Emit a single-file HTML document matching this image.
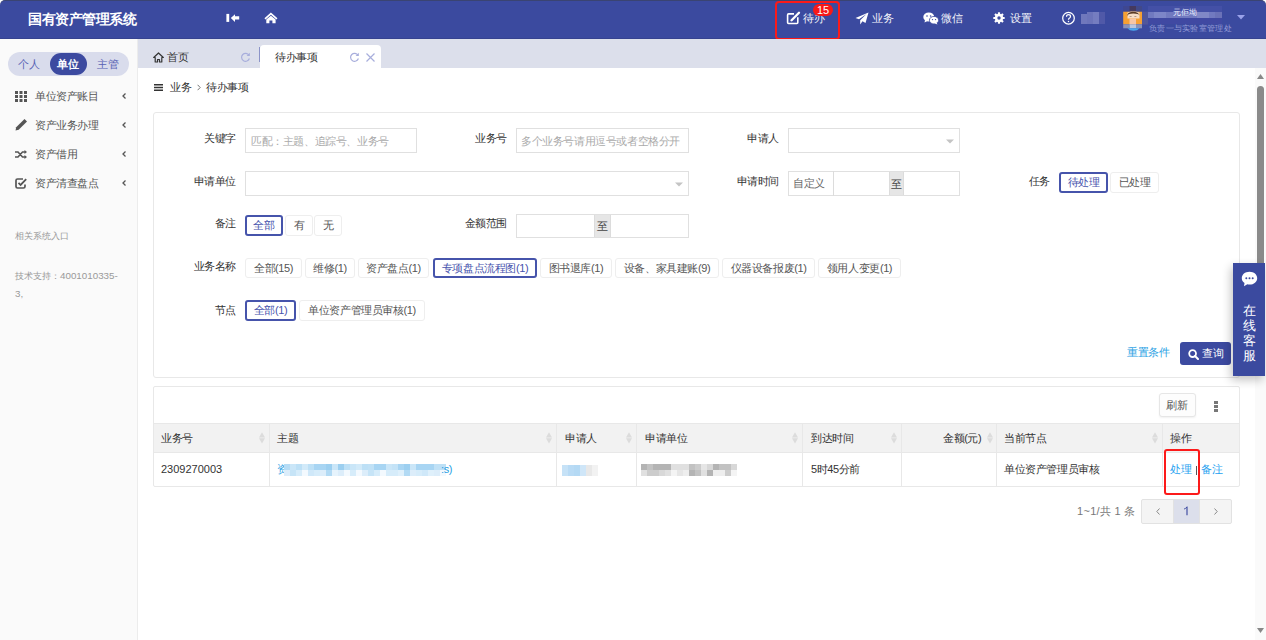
<!DOCTYPE html>
<html><head><meta charset="utf-8">
<style>
*{box-sizing:border-box;margin:0;padding:0}
html,body{width:1266px;height:640px;overflow:hidden;background:#fff;font-family:"Liberation Sans",sans-serif;color:#333;letter-spacing:-0.4px}
.a{position:absolute;white-space:nowrap}
#hdr{position:absolute;left:0;top:0;width:1266px;height:39px;background:#3b4a9f;border-top:1px solid #3a4472;border-bottom:1px solid #36438f;border-radius:5px 5px 0 0}
.nav{color:#f2f3fa;font-size:10.5px;line-height:20px}
#side{position:absolute;left:0;top:39px;width:138px;height:601px;background:#fafafa;border-right:1px solid #ececec}
.mi{color:#555;font-size:11px;line-height:20px}
.car{position:absolute;left:122px;width:4px;height:6px}
#tabs{position:absolute;left:138px;top:39px;width:1128px;height:29px;background:#dcdfeb}
.lb{font-size:11px;line-height:20px;color:#333;text-align:right}
.inp{position:absolute;border:1px solid #e0e0e0;background:#fff}
.ph{font-size:11px;line-height:20px;color:#aaa}
.btn{position:absolute;border:1px solid #eeeeee;border-radius:3px;background:#fff;font-size:11px;line-height:18px;color:#555;text-align:center}
.btn.on{border:2px solid #4654ab;color:#4753ad;line-height:17px}
.addon{position:absolute;background:#e6e6e6;font-size:11px;color:#444;text-align:center}
.th{font-size:11px;line-height:20px;color:#333}
.td{font-size:11px;line-height:20px;color:#333}
.vl{position:absolute;width:1px;background:#e8e8e8}
.sort{position:absolute;width:6px;height:12px}
</style></head><body>
<div id="hdr"></div>
<div class="a" style="left:28px;top:1px;font-size:13.6px;line-height:38px;font-weight:bold;color:#fff;letter-spacing:-0.5px">国有资产管理系统</div>
<!-- collapse icon -->
<svg class="a" style="left:224px;top:11px" width="18" height="14" viewBox="0 0 18 14"><rect x="2.4" y="2.9" width="2.8" height="8" fill="#fff"/><path d="M6.8 7 L11 3.2 L11 5.2 L15.2 5.2 L15.2 8.5 L11 8.5 L11 10.9 Z" fill="#fff"/></svg>
<!-- home icon -->
<svg class="a" style="left:264px;top:11px" width="14" height="14" viewBox="0 0 14 14"><path d="M1 7.9 L6.9 2.6 L12.9 7.9" stroke="#fff" stroke-width="1.7" fill="none" stroke-linejoin="miter"/><path d="M2.3 8.4 L6.9 4.7 L11.6 8.4 V12.3 H8.4 V9.4 H5.4 V12.3 H2.3 Z" fill="#fff"/></svg>
<!-- header nav -->
<div class="a" style="left:774.5px;top:1.4px;width:65.6px;height:38.4px;border:2.6px solid #fc1a1a;border-radius:4px"></div>
<svg class="a" style="left:785px;top:11px" width="16" height="14" viewBox="0 0 16 14"><path d="M9 2.9 H3.6 Q2.6 2.9 2.6 3.9 V11.6 Q2.6 12.5 3.6 12.5 H11.9 Q12.8 12.5 12.8 11.6 V6.2" stroke="#fff" stroke-width="1.6" fill="none"/><path d="M6.6 9.2 L14 1.8" stroke="#fff" stroke-width="2.3" stroke-linecap="round"/><path d="M5.6 10.3 L6 8.3 L7.5 9.8 Z" fill="#fff"/></svg>
<div class="a nav" style="left:803px;top:8px">待办</div>
<div class="a" style="left:813px;top:4px;width:20px;height:12px;border-radius:6px;background:#f81818;color:#fff;font-size:11px;line-height:12px;text-align:center;letter-spacing:0">15</div>
<svg class="a" style="left:855px;top:12px" width="14" height="13" viewBox="0 0 14 13"><path d="M13.5 0.5 L0.5 6 L4 7.2 L11.5 2 L5.2 8.2 L5.2 12.5 L7.5 9.2 L10.5 11 Z" fill="#fff"/></svg>
<div class="a nav" style="left:872px;top:8px">业务</div>
<svg class="a" style="left:923px;top:12px" width="16" height="13" viewBox="0 0 16 13"><ellipse cx="5.8" cy="5" rx="5.5" ry="4.5" fill="#fff"/><path d="M2 8 L1.5 10.5 L4.5 9 Z" fill="#fff"/><ellipse cx="11" cy="8.2" rx="4.6" ry="3.8" fill="#fff" stroke="#3c4aa0" stroke-width="0.8"/><path d="M13.5 10.8 L14.5 12.6 L11.8 11.6 Z" fill="#fff"/><circle cx="4" cy="4" r="0.8" fill="#3c4aa0"/><circle cx="7.6" cy="4" r="0.8" fill="#3c4aa0"/><circle cx="9.5" cy="7.6" r="0.7" fill="#3c4aa0"/><circle cx="12.5" cy="7.6" r="0.7" fill="#3c4aa0"/></svg>
<div class="a nav" style="left:941px;top:8px">微信</div>
<svg class="a" style="left:993px;top:12px" width="12" height="12" viewBox="0 0 12 12"><g fill="#fff"><circle cx="6" cy="6" r="4.2"/><rect x="4.9" y="0.3" width="2.2" height="3" rx="0.4" transform="rotate(0 6 6)"/><rect x="4.9" y="0.3" width="2.2" height="3" rx="0.4" transform="rotate(45 6 6)"/><rect x="4.9" y="0.3" width="2.2" height="3" rx="0.4" transform="rotate(90 6 6)"/><rect x="4.9" y="0.3" width="2.2" height="3" rx="0.4" transform="rotate(135 6 6)"/><rect x="4.9" y="0.3" width="2.2" height="3" rx="0.4" transform="rotate(180 6 6)"/><rect x="4.9" y="0.3" width="2.2" height="3" rx="0.4" transform="rotate(225 6 6)"/><rect x="4.9" y="0.3" width="2.2" height="3" rx="0.4" transform="rotate(270 6 6)"/><rect x="4.9" y="0.3" width="2.2" height="3" rx="0.4" transform="rotate(315 6 6)"/></g><circle cx="6" cy="6" r="1.7" fill="#3b4a9f"/></svg>
<div class="a nav" style="left:1010px;top:8px">设置</div>
<svg class="a" style="left:1061px;top:11px" width="15" height="15" viewBox="0 0 15 15"><circle cx="7.5" cy="7.2" r="5.8" stroke="#fff" stroke-width="1.25" fill="none"/><path d="M5.5 5.7 Q5.5 3.7 7.5 3.7 Q9.5 3.7 9.5 5.5 Q9.5 6.6 8.3 7.2 Q7.5 7.7 7.5 8.8" stroke="#fff" stroke-width="1.2" fill="none"/><circle cx="7.5" cy="10.5" r="0.75" fill="#fff"/></svg>
<div class="a" style="left:1081px;top:14px;width:6px;height:10px;background:#7078bc"></div>
<div class="a" style="left:1087px;top:12px;width:6px;height:12px;background:#6c74ba"></div>
<div class="a" style="left:1093px;top:12px;width:6px;height:12px;background:#757dc0"></div>
<div class="a" style="left:1099px;top:12px;width:6px;height:12px;background:#5059a8"></div>
<!-- avatar -->
<svg class="a" style="left:1118px;top:3px" width="30" height="30" viewBox="0 0 30 30">
<rect x="5.2" y="3" width="6.3" height="5.7" fill="#3f4790"/>
<rect x="11.5" y="3" width="6.5" height="5.7" fill="#45395e"/>
<rect x="18" y="3" width="6" height="5.7" fill="#414989"/>
<path d="M5.2 8.7 H24 V21.3 H5.2 Z" fill="#f6a033"/>
<path d="M9.5 9.5 Q14.6 7.4 21.5 9.5 L21.5 15.5 L9.5 15.5 Z" fill="#f5dcc6"/>
<path d="M9.3 13 Q9 9 14.6 8.7 Q20.5 8.6 21.7 12.5 L20.5 11.2 Q15 9.6 10.5 11.2 Z" fill="#5a3a22"/>
<rect x="11.5" y="15.5" width="6.5" height="5.8" fill="#f6c6a6"/>
<rect x="11.6" y="13.2" width="2" height="0.7" fill="#9a7a66"/><rect x="16.4" y="13.2" width="2" height="0.7" fill="#9a7a66"/>
<rect x="5.2" y="21.3" width="6.3" height="4" fill="#8a92b8"/>
<rect x="11.5" y="21.3" width="6.5" height="4" fill="#b9c6de"/>
<rect x="18" y="21.3" width="6" height="4" fill="#8a92b8"/>
<path d="M9.4 25.3 H21.6 Q19.5 27.8 15.5 27.8 Q11.5 27.8 9.4 25.3 Z" fill="#4aa8f0"/>
<rect x="24" y="8.7" width="6" height="6.3" fill="#585a9a"/>
<rect x="24" y="15" width="6" height="6.3" fill="#6a5f92"/>
</svg>
<!-- name blur -->
<div class="a" style="left:1148px;top:6px;width:74px;height:6px;background:#4450a6"></div>
<div class="a" style="left:1148px;top:12px;width:74px;height:6px;background:#717ac0"></div>
<div class="a" style="left:1154px;top:12px;width:12px;height:6px;background:#7d86c8"></div>
<div class="a" style="left:1197px;top:12px;width:12px;height:6px;background:#8088c6"></div>
<div class="a" style="left:1215px;top:12px;width:7px;height:6px;background:#6a72b8"></div>
<div class="a" style="left:1173px;top:8px;font-size:7.5px;line-height:10px;color:#eef0ff;letter-spacing:0">元佢坳</div>
<div class="a" style="left:1148px;top:18px;width:74px;height:6px;background:#4049a2"></div>
<div class="a" style="left:1142px;top:12px;width:6px;height:12px;background:#50579c"></div>
<div class="a" style="left:1149px;top:24px;font-size:8px;line-height:10px;color:#959cd8;letter-spacing:0.3px">负责一与实验室管理处</div>
<svg class="a" style="left:1237px;top:15px" width="8" height="5" viewBox="0 0 8 5"><path d="M0 0 H8 L4 4.5 Z" fill="#9aa2ea"/></svg>

<!-- sidebar -->
<div id="side"></div>
<div class="a" style="left:8px;top:52px;width:121px;height:24px;border-radius:12px;background:#d9dcec"></div>
<div class="a" style="left:50px;top:53px;width:37px;height:22px;border-radius:11px;background:#3c4aa0"></div>
<div class="a" style="left:18px;top:54px;font-size:11px;line-height:20px;color:#5862b4">个人</div>
<div class="a" style="left:57px;top:54px;font-size:11px;line-height:20px;color:#fff;font-weight:bold">单位</div>
<div class="a" style="left:97px;top:54px;font-size:11px;line-height:20px;color:#5862b4">主管</div>

<svg class="a" style="left:15px;top:91px" width="12" height="11" viewBox="0 0 12 11"><g fill="#555"><rect x="0" y="0" width="3" height="3"/><rect x="4.5" y="0" width="3" height="3"/><rect x="9" y="0" width="3" height="3"/><rect x="0" y="4" width="3" height="3"/><rect x="4.5" y="4" width="3" height="3"/><rect x="9" y="4" width="3" height="3"/><rect x="0" y="8" width="3" height="3"/><rect x="4.5" y="8" width="3" height="3"/><rect x="9" y="8" width="3" height="3"/></g></svg>
<div class="a mi" style="left:35px;top:86px">单位资产账目</div>
<svg class="car" style="top:93px" viewBox="0 0 4 6"><path d="M3.5 0.5 L1 3 L3.5 5.5" stroke="#555" stroke-width="1.3" fill="none"/></svg>
<svg class="a" style="left:15px;top:118px" width="13" height="13" viewBox="0 0 13 13"><path d="M0.5 12.5 L1.2 9.3 L9.5 1 L12 3.5 L3.7 11.8 Z" fill="#555"/></svg>
<div class="a mi" style="left:35px;top:115px">资产业务办理</div>
<svg class="car" style="top:122px" viewBox="0 0 4 6"><path d="M3.5 0.5 L1 3 L3.5 5.5" stroke="#555" stroke-width="1.3" fill="none"/></svg>
<svg class="a" style="left:15px;top:150px" width="12" height="9" viewBox="0 0 12 9"><path d="M0 2 H3 L7.5 7 H10 M0 7 H3 L7.5 2 H10" stroke="#555" stroke-width="1.6" fill="none"/><path d="M9.5 0 L12 2 L9.5 4 Z M9.5 5 L12 7 L9.5 9 Z" fill="#555"/></svg>
<div class="a mi" style="left:35px;top:144px">资产借用</div>
<svg class="car" style="top:151px" viewBox="0 0 4 6"><path d="M3.5 0.5 L1 3 L3.5 5.5" stroke="#555" stroke-width="1.3" fill="none"/></svg>
<svg class="a" style="left:15px;top:178px" width="12" height="11" viewBox="0 0 12 11"><path d="M8 1 H2.5 Q1 1 1 2.5 V8.5 Q1 10 2.5 10 H8.5 Q10 10 10 8.5 V6.5" stroke="#555" stroke-width="1.7" fill="none"/><path d="M3.5 4.8 L5.6 7 L11.2 1.2" stroke="#555" stroke-width="1.8" fill="none"/></svg>
<div class="a mi" style="left:35px;top:173px">资产清查盘点</div>
<svg class="car" style="top:180px" viewBox="0 0 4 6"><path d="M3.5 0.5 L1 3 L3.5 5.5" stroke="#555" stroke-width="1.3" fill="none"/></svg>
<div class="a" style="left:15px;top:226px;font-size:8.8px;line-height:20px;color:#999;letter-spacing:0">相关系统入口</div>
<div class="a" style="left:15px;top:267px;font-size:8.8px;line-height:18px;color:#999;white-space:normal;width:130px;letter-spacing:0">技术支持：<span style="font-size:9.8px;letter-spacing:0">4001010335-</span><br><span style="font-size:9.8px;letter-spacing:0">3,</span></div>

<!-- tabs -->
<div id="tabs"></div>
<div class="a" style="left:260px;top:45px;width:121px;height:23px;background:#fff;border-radius:4px 4px 0 0"></div>
<div class="a" style="left:259px;top:47px;width:1px;height:15px;background:#8c94c8"></div>
<svg class="a" style="left:153px;top:52px" width="11" height="11" viewBox="0 0 11 11"><path d="M5.5 1 L10.3 5.5 L8.8 5.5 L8.8 10 L6.5 10 L6.5 7.5 L4.5 7.5 L4.5 10 L2.2 10 L2.2 5.5 L0.7 5.5 Z" stroke="#333" stroke-width="1.2" fill="none" stroke-linejoin="round"/></svg>
<div class="a" style="left:167px;top:47px;font-size:10.5px;line-height:20px;color:#333">首页</div>
<svg class="a" style="left:240px;top:52px" width="11" height="11" viewBox="0 0 11 11"><path d="M9 3.2 A4 4 0 1 0 9.4 6.5" stroke="#a8aedc" stroke-width="1.2" fill="none"/><path d="M9.8 0.8 V4 H6.6 Z" fill="#a8aedc"/></svg>
<div class="a" style="left:275px;top:47px;font-size:11px;line-height:20px;color:#333">待办事项</div>
<svg class="a" style="left:349px;top:52px" width="11" height="11" viewBox="0 0 11 11"><path d="M9 3.2 A4 4 0 1 0 9.4 6.5" stroke="#a8aedc" stroke-width="1.2" fill="none"/><path d="M9.8 0.8 V4 H6.6 Z" fill="#a8aedc"/></svg>
<svg class="a" style="left:366px;top:53px" width="9" height="9" viewBox="0 0 9 9"><path d="M0.5 0.5 L8.5 8.5 M8.5 0.5 L0.5 8.5" stroke="#a8aedc" stroke-width="1.2"/></svg>

<!-- scrollbar -->
<div class="a" style="left:1255px;top:68px;width:11px;height:572px;background:#fafafa"></div>
<svg class="a" style="left:1257px;top:74px" width="7" height="5" viewBox="0 0 7 5"><path d="M0 5 H7 L3.5 0 Z" fill="#888"/></svg>
<div class="a" style="left:1257px;top:86px;width:7px;height:200px;border-radius:3.5px;background:#8a8a8a"></div>
<svg class="a" style="left:1257px;top:628px" width="7" height="5" viewBox="0 0 7 5"><path d="M0 0 H7 L3.5 5 Z" fill="#888"/></svg>

<!-- breadcrumb -->
<svg class="a" style="left:154px;top:84px" width="9" height="7" viewBox="0 0 9 7"><g fill="#333"><rect x="0" y="0" width="9" height="1.5"/><rect x="0" y="2.75" width="9" height="1.5"/><rect x="0" y="5.5" width="9" height="1.5"/></g></svg>
<div class="a" style="left:170px;top:77px;font-size:11px;line-height:20px;color:#333">业务</div>
<svg class="a" style="left:197px;top:84px" width="4" height="7" viewBox="0 0 4 7"><path d="M0.6 0.8 L3.2 3.5 L0.6 6.2" stroke="#666" stroke-width="0.9" fill="none"/></svg>
<div class="a" style="left:206px;top:77px;font-size:11px;line-height:20px;color:#333">待办事项</div>


<!-- search panel -->
<div class="a" style="left:153px;top:112px;width:1087px;height:266px;border:1px solid #e8e8e8;border-radius:3px"></div>
<!-- row1 -->
<div class="a lb" style="left:160px;top:128px;width:76px">关键字</div>
<div class="inp" style="left:245px;top:128px;width:172px;height:25px"></div>
<div class="a ph" style="left:251px;top:131px">匹配：主题、追踪号、业务号</div>
<div class="a lb" style="left:430px;top:128px;width:77px">业务号</div>
<div class="inp" style="left:516px;top:128px;width:173px;height:25px"></div>
<div class="a ph" style="left:521px;top:131px">多个业务号请用逗号或者空格分开</div>
<div class="a lb" style="left:700px;top:128px;width:79px">申请人</div>
<div class="inp" style="left:788px;top:128px;width:172px;height:25px"></div>
<svg class="a" style="left:946px;top:139px" width="8" height="5" viewBox="0 0 8 5"><path d="M0 0.5 H8 L4 4.5 Z" fill="#c4c4c4"/></svg>
<!-- row2 -->
<div class="a lb" style="left:160px;top:171px;width:76px">申请单位</div>
<div class="inp" style="left:245px;top:171px;width:444px;height:25px"></div>
<svg class="a" style="left:675px;top:182px" width="8" height="5" viewBox="0 0 8 5"><path d="M0 0.5 H8 L4 4.5 Z" fill="#c4c4c4"/></svg>
<div class="a lb" style="left:700px;top:171px;width:79px">申请时间</div>
<div class="inp" style="left:788px;top:171px;width:172px;height:25px"></div>
<div class="a" style="left:833px;top:171px;width:1px;height:25px;background:#dcdcdc"></div>
<div class="addon" style="left:889px;top:172px;width:15px;height:23px;line-height:25px;border-left:1px solid #dcdcdc;border-right:1px solid #dcdcdc">至</div>
<div class="a" style="left:793px;top:173px;width:33px;overflow:hidden;font-size:11px;line-height:20px;color:#666">自定义</div>
<div class="a lb" style="left:960px;top:171px;width:90px">任务</div>
<div class="btn on" style="left:1059px;top:172px;width:49px;height:21px">待处理</div>
<div class="btn" style="left:1110px;top:172px;width:49px;height:21px">已处理</div>
<!-- row3 -->
<div class="a lb" style="left:160px;top:213px;width:76px">备注</div>
<div class="btn on" style="left:245px;top:215px;width:38px;height:21px">全部</div>
<div class="btn" style="left:285px;top:215px;width:28px;height:21px">有</div>
<div class="btn" style="left:314px;top:215px;width:28px;height:21px">无</div>
<div class="a lb" style="left:430px;top:213px;width:77px">金额范围</div>
<div class="inp" style="left:516px;top:214px;width:173px;height:24px"></div>
<div class="addon" style="left:594px;top:215px;width:17px;height:22px;line-height:22px;border-left:1px solid #dcdcdc;border-right:1px solid #dcdcdc">至</div>
<!-- row4 -->
<div class="a lb" style="left:160px;top:256px;width:76px">业务名称</div>
<div class="btn" style="left:245px;top:258px;width:57px;height:20px">全部(15)</div>
<div class="btn" style="left:305px;top:258px;width:50px;height:20px">维修(1)</div>
<div class="btn" style="left:358px;top:258px;width:71px;height:20px">资产盘点(1)</div>
<div class="btn on" style="left:433px;top:258px;width:104px;height:20px;line-height:16px">专项盘点流程图(1)</div>
<div class="btn" style="left:540px;top:258px;width:72px;height:20px">图书退库(1)</div>
<div class="btn" style="left:615px;top:258px;width:104px;height:20px">设备、家具建账(9)</div>
<div class="btn" style="left:722px;top:258px;width:93px;height:20px">仪器设备报废(1)</div>
<div class="btn" style="left:818px;top:258px;width:83px;height:20px">领用人变更(1)</div>
<!-- row5 -->
<div class="a lb" style="left:160px;top:300px;width:76px">节点</div>
<div class="btn on" style="left:245px;top:300px;width:51px;height:21px">全部(1)</div>
<div class="btn" style="left:299px;top:300px;width:126px;height:21px">单位资产管理员审核(1)</div>
<!-- actions -->
<div class="a" style="left:1127px;top:342px;font-size:11px;line-height:20px;color:#2a9fe4">重置条件</div>
<div class="a" style="left:1180px;top:342px;width:51px;height:23px;border-radius:3px;background:#3c4aa0"></div>
<svg class="a" style="left:1188px;top:349px" width="11" height="11" viewBox="0 0 11 11"><circle cx="4.6" cy="4.6" r="3.4" stroke="#fff" stroke-width="1.8" fill="none"/><path d="M7 7 L10 10" stroke="#fff" stroke-width="2" stroke-linecap="round"/></svg>
<div class="a" style="left:1202px;top:343px;font-size:11px;line-height:20px;color:#fff">查询</div>

<!-- table card -->
<div class="a" style="left:153px;top:386px;width:1087px;height:101px;border:1px solid #e8e8e8;border-radius:2px"></div>
<div class="a" style="left:1159px;top:393px;width:37px;height:24px;border:1px solid #e6e6e6;border-radius:3px;background:#fdfdfd;box-shadow:0 1px 2px rgba(0,0,0,0.06)"></div>
<div class="a" style="left:1166px;top:395px;font-size:11px;line-height:20px;color:#555">刷新</div>
<svg class="a" style="left:1214px;top:401px" width="4" height="11" viewBox="0 0 4 11"><g fill="#777"><rect x="0" y="0" width="4" height="3"/><rect x="0" y="4" width="4" height="3"/><rect x="0" y="8" width="4" height="3"/></g></svg>
<div class="a" style="left:154px;top:423px;width:1085px;height:30px;background:#f2f2f2;border-top:1px solid #e8e8e8;border-bottom:1px solid #e8e8e8"></div>
<div class="vl" style="left:269px;top:423px;height:63px"></div>
<div class="vl" style="left:556px;top:423px;height:63px"></div>
<div class="vl" style="left:636px;top:423px;height:63px"></div>
<div class="vl" style="left:802px;top:423px;height:63px"></div>
<div class="vl" style="left:901px;top:423px;height:63px"></div>
<div class="vl" style="left:996px;top:423px;height:63px"></div>
<div class="vl" style="left:1162px;top:423px;height:63px"></div>
<div class="a th" style="left:161px;top:428px">业务号</div>
<div class="a th" style="left:277px;top:428px">主题</div>
<div class="a th" style="left:565px;top:428px">申请人</div>
<div class="a th" style="left:645px;top:428px">申请单位</div>
<div class="a th" style="left:811px;top:428px">到达时间</div>
<div class="a th" style="left:943px;top:428px">金额(元)</div>
<div class="a th" style="left:1004px;top:428px">当前节点</div>
<div class="a th" style="left:1170px;top:428px">操作</div>
<svg class="sort" style="left:259px;top:432px" viewBox="0 0 6 12"><path d="M0 5.6 L3 0.3 L6 5.6 Z M0 6.2 L3 11.5 L6 6.2 Z" fill="#dcdcdc"/></svg>
<svg class="sort" style="left:546px;top:432px" viewBox="0 0 6 12"><path d="M0 5.6 L3 0.3 L6 5.6 Z M0 6.2 L3 11.5 L6 6.2 Z" fill="#dcdcdc"/></svg>
<svg class="sort" style="left:626px;top:432px" viewBox="0 0 6 12"><path d="M0 5.6 L3 0.3 L6 5.6 Z M0 6.2 L3 11.5 L6 6.2 Z" fill="#dcdcdc"/></svg>
<svg class="sort" style="left:792px;top:432px" viewBox="0 0 6 12"><path d="M0 5.6 L3 0.3 L6 5.6 Z M0 6.2 L3 11.5 L6 6.2 Z" fill="#dcdcdc"/></svg>
<svg class="sort" style="left:891px;top:432px" viewBox="0 0 6 12"><path d="M0 5.6 L3 0.3 L6 5.6 Z M0 6.2 L3 11.5 L6 6.2 Z" fill="#dcdcdc"/></svg>
<svg class="sort" style="left:987px;top:432px" viewBox="0 0 6 12"><path d="M0 5.6 L3 0.3 L6 5.6 Z M0 6.2 L3 11.5 L6 6.2 Z" fill="#dcdcdc"/></svg>
<svg class="sort" style="left:1152px;top:432px" viewBox="0 0 6 12"><path d="M0 5.6 L3 0.3 L6 5.6 Z M0 6.2 L3 11.5 L6 6.2 Z" fill="#dcdcdc"/></svg>

<div class="a td" style="left:161px;top:459px;letter-spacing:0">2309270003</div>
<div class="a td" style="left:277px;top:459px;color:#2a9fe4">资</div>
<div class="a" style="left:284px;top:464px;width:6px;height:6px;background:#b6dcf5"></div><div class="a" style="left:284px;top:470px;width:6px;height:6px;background:#dcedfa"></div><div class="a" style="left:290px;top:464px;width:6px;height:6px;background:#cae6f8"></div><div class="a" style="left:290px;top:470px;width:6px;height:6px;background:#c6e4f7"></div><div class="a" style="left:296px;top:464px;width:6px;height:6px;background:#bde0f6"></div><div class="a" style="left:296px;top:470px;width:6px;height:6px;background:#d6ecfa"></div><div class="a" style="left:302px;top:464px;width:6px;height:6px;background:#d2eaf9"></div><div class="a" style="left:302px;top:470px;width:6px;height:6px;background:#f3f9fe"></div><div class="a" style="left:308px;top:464px;width:6px;height:6px;background:#bde0f6"></div><div class="a" style="left:308px;top:470px;width:6px;height:6px;background:#cfe8f9"></div><div class="a" style="left:314px;top:464px;width:6px;height:6px;background:#a8d5f3"></div><div class="a" style="left:314px;top:470px;width:6px;height:6px;background:#d6ecfa"></div><div class="a" style="left:320px;top:464px;width:6px;height:6px;background:#a8d5f3"></div><div class="a" style="left:320px;top:470px;width:6px;height:6px;background:#dcedfa"></div><div class="a" style="left:326px;top:464px;width:6px;height:6px;background:#9ccff0"></div><div class="a" style="left:326px;top:470px;width:6px;height:6px;background:#b2daf4"></div><div class="a" style="left:332px;top:464px;width:6px;height:6px;background:#cae6f8"></div><div class="a" style="left:332px;top:470px;width:6px;height:6px;background:#e6f3fc"></div><div class="a" style="left:338px;top:464px;width:6px;height:6px;background:#9ccff0"></div><div class="a" style="left:338px;top:470px;width:6px;height:6px;background:#dcedfa"></div><div class="a" style="left:344px;top:464px;width:6px;height:6px;background:#bde0f6"></div><div class="a" style="left:344px;top:470px;width:6px;height:6px;background:#f3f9fe"></div><div class="a" style="left:350px;top:464px;width:6px;height:6px;background:#cae6f8"></div><div class="a" style="left:350px;top:470px;width:6px;height:6px;background:#d6ecfa"></div><div class="a" style="left:356px;top:464px;width:6px;height:6px;background:#d2eaf9"></div><div class="a" style="left:356px;top:470px;width:6px;height:6px;background:#f3f9fe"></div><div class="a" style="left:362px;top:464px;width:6px;height:6px;background:#bde0f6"></div><div class="a" style="left:362px;top:470px;width:6px;height:6px;background:#dcedfa"></div><div class="a" style="left:368px;top:464px;width:6px;height:6px;background:#c0e1f6"></div><div class="a" style="left:368px;top:470px;width:6px;height:6px;background:#c6e4f7"></div><div class="a" style="left:374px;top:464px;width:6px;height:6px;background:#a8d5f3"></div><div class="a" style="left:374px;top:470px;width:6px;height:6px;background:#d6ecfa"></div><div class="a" style="left:380px;top:464px;width:6px;height:6px;background:#a8d5f3"></div><div class="a" style="left:380px;top:470px;width:6px;height:6px;background:#f3f9fe"></div><div class="a" style="left:386px;top:464px;width:6px;height:6px;background:#cae6f8"></div><div class="a" style="left:386px;top:470px;width:6px;height:6px;background:#d6ecfa"></div><div class="a" style="left:392px;top:464px;width:6px;height:6px;background:#c4e3f7"></div><div class="a" style="left:392px;top:470px;width:6px;height:6px;background:#d6ecfa"></div><div class="a" style="left:398px;top:464px;width:6px;height:6px;background:#a8d5f3"></div><div class="a" style="left:398px;top:470px;width:6px;height:6px;background:#dff0fb"></div><div class="a" style="left:404px;top:464px;width:6px;height:6px;background:#9ccff0"></div><div class="a" style="left:404px;top:470px;width:6px;height:6px;background:#b2daf4"></div><div class="a" style="left:410px;top:464px;width:6px;height:6px;background:#cae6f8"></div><div class="a" style="left:410px;top:470px;width:6px;height:6px;background:#dcedfa"></div><div class="a" style="left:416px;top:464px;width:6px;height:6px;background:#a8d5f3"></div><div class="a" style="left:416px;top:470px;width:6px;height:6px;background:#d6ecfa"></div><div class="a" style="left:422px;top:464px;width:6px;height:6px;background:#a8d5f3"></div><div class="a" style="left:422px;top:470px;width:6px;height:6px;background:#cfe8f9"></div><div class="a" style="left:428px;top:464px;width:6px;height:6px;background:#a8d5f3"></div><div class="a" style="left:428px;top:470px;width:6px;height:6px;background:#dff0fb"></div><div class="a" style="left:434px;top:464px;width:6px;height:6px;background:#c0e1f6"></div><div class="a" style="left:434px;top:470px;width:6px;height:6px;background:#dcedfa"></div><div class="a" style="left:440px;top:464px;width:6px;height:6px;background:#bde0f6"></div><div class="a" style="left:440px;top:470px;width:6px;height:6px;background:#f3f9fe"></div><div class="a" style="left:562px;top:465px;width:6px;height:11px;background:#c6e2f7"></div><div class="a" style="left:568px;top:465px;width:6px;height:11px;background:#b9dbf5"></div><div class="a" style="left:574px;top:465px;width:6px;height:11px;background:#b4d9f4"></div><div class="a" style="left:580px;top:465px;width:6px;height:11px;background:#cfe6f8"></div><div class="a" style="left:586px;top:465px;width:6px;height:11px;background:#e8e8e8"></div><div class="a" style="left:592px;top:465px;width:6px;height:11px;background:#f2f2f2"></div><div class="a" style="left:641px;top:464px;width:6px;height:6px;background:#b4b4b4"></div><div class="a" style="left:641px;top:470px;width:6px;height:6px;background:#e0e0e0"></div><div class="a" style="left:647px;top:464px;width:6px;height:6px;background:#c2c2c2"></div><div class="a" style="left:647px;top:470px;width:6px;height:6px;background:#cccccc"></div><div class="a" style="left:653px;top:464px;width:6px;height:6px;background:#b4b4b4"></div><div class="a" style="left:653px;top:470px;width:6px;height:6px;background:#cccccc"></div><div class="a" style="left:659px;top:464px;width:6px;height:6px;background:#b4b4b4"></div><div class="a" style="left:659px;top:470px;width:6px;height:6px;background:#d8d8d8"></div><div class="a" style="left:665px;top:464px;width:6px;height:6px;background:#b4b4b4"></div><div class="a" style="left:665px;top:470px;width:6px;height:6px;background:#e0e0e0"></div><div class="a" style="left:671px;top:464px;width:6px;height:6px;background:#e0e0e0"></div><div class="a" style="left:671px;top:470px;width:6px;height:6px;background:#f4f4f4"></div><div class="a" style="left:677px;top:464px;width:6px;height:6px;background:#e0e0e0"></div><div class="a" style="left:677px;top:470px;width:6px;height:6px;background:#e6e6e6"></div><div class="a" style="left:683px;top:464px;width:6px;height:6px;background:#e0e0e0"></div><div class="a" style="left:683px;top:470px;width:6px;height:6px;background:#eeeeee"></div><div class="a" style="left:689px;top:464px;width:6px;height:6px;background:#c2c2c2"></div><div class="a" style="left:689px;top:470px;width:6px;height:6px;background:#b4b4b4"></div><div class="a" style="left:695px;top:464px;width:6px;height:6px;background:#cccccc"></div><div class="a" style="left:695px;top:470px;width:6px;height:6px;background:#c2c2c2"></div><div class="a" style="left:701px;top:464px;width:6px;height:6px;background:#e6e6e6"></div><div class="a" style="left:701px;top:470px;width:6px;height:6px;background:#e0e0e0"></div><div class="a" style="left:707px;top:464px;width:6px;height:6px;background:#d8d8d8"></div><div class="a" style="left:707px;top:470px;width:6px;height:6px;background:#b4b4b4"></div><div class="a" style="left:713px;top:464px;width:6px;height:6px;background:#b4b4b4"></div><div class="a" style="left:713px;top:470px;width:6px;height:6px;background:#eeeeee"></div><div class="a" style="left:719px;top:464px;width:6px;height:6px;background:#c2c2c2"></div><div class="a" style="left:719px;top:470px;width:6px;height:6px;background:#eeeeee"></div><div class="a" style="left:725px;top:464px;width:6px;height:6px;background:#c2c2c2"></div><div class="a" style="left:725px;top:470px;width:6px;height:6px;background:#cccccc"></div><div class="a" style="left:731px;top:464px;width:6px;height:6px;background:#d8d8d8"></div><div class="a" style="left:731px;top:470px;width:6px;height:6px;background:#f4f4f4"></div>
<div class="a td" style="left:441px;top:459px;color:#2a9fe4">:s)</div>
<div class="a td" style="left:811px;top:459px">5时45分前</div>
<div class="a td" style="left:1004px;top:459px">单位资产管理员审核</div>
<div class="a td" style="left:1170px;top:459px;color:#1e9ff0">处理</div>
<div class="a" style="left:1195.5px;top:466px;width:1.6px;height:9px;background:#555"></div>
<div class="a td" style="left:1201px;top:459px;color:#1e9ff0">备注</div>
<div class="a" style="left:1164px;top:449px;width:35.6px;height:46.3px;border:2.4px solid #fc1a1a;border-radius:3px"></div>

<!-- pagination -->
<div class="a" style="left:1077px;top:501px;font-size:11px;line-height:20px;color:#777;letter-spacing:0.3px">1~1/共 1 条</div>
<div class="a" style="left:1141px;top:499px;width:91px;height:25px;border:1px solid #e2e2e2;border-radius:2px;background:#f4f4f4"></div>
<div class="a" style="left:1173px;top:500px;width:27px;height:23px;background:#dcdfeb;border-left:1px solid #e2e2e2;border-right:1px solid #e2e2e2"></div>
<svg class="a" style="left:1183px;top:506px" width="6" height="10" viewBox="0 0 6 10"><path d="M4 0.8 V9.3" stroke="#3c4aa0" stroke-width="1.15"/><path d="M4.2 0.8 Q3 2.4 1 3.1" stroke="#3c4aa0" stroke-width="0.9" fill="none"/></svg>
<svg class="a" style="left:1156px;top:508px" width="4" height="7" viewBox="0 0 4 7"><path d="M3.5 0.5 L0.8 3.5 L3.5 6.5" stroke="#888" stroke-width="1" fill="none"/></svg>
<svg class="a" style="left:1214px;top:508px" width="4" height="7" viewBox="0 0 4 7"><path d="M0.5 0.5 L3.2 3.5 L0.5 6.5" stroke="#888" stroke-width="1" fill="none"/></svg>

<!-- float service -->
<div class="a" style="left:1233px;top:263px;width:32px;height:113px;background:#3b4a9f;box-shadow:-2px 4px 10px rgba(0,0,0,0.24)"></div>
<svg class="a" style="left:1241px;top:271px" width="17" height="16" viewBox="0 0 17 16"><path d="M8.5 0.8 C4 0.8 0.8 3.6 0.8 7.2 C0.8 9.2 1.8 10.9 3.5 12 L3 15.2 L6.3 13.3 C7 13.5 7.7 13.6 8.5 13.6 C13 13.6 16.2 10.8 16.2 7.2 C16.2 3.6 13 0.8 8.5 0.8 Z" fill="#fff"/><g fill="#3c4aa0"><circle cx="5.3" cy="7.2" r="1"/><circle cx="8.5" cy="7.2" r="1"/><circle cx="11.7" cy="7.2" r="1"/></g></svg>
<div class="a" style="left:1241.5px;top:303.5px;width:15px;font-size:12.5px;line-height:15px;color:#fff;white-space:normal;text-align:center">在线客服</div>

</body></html>
